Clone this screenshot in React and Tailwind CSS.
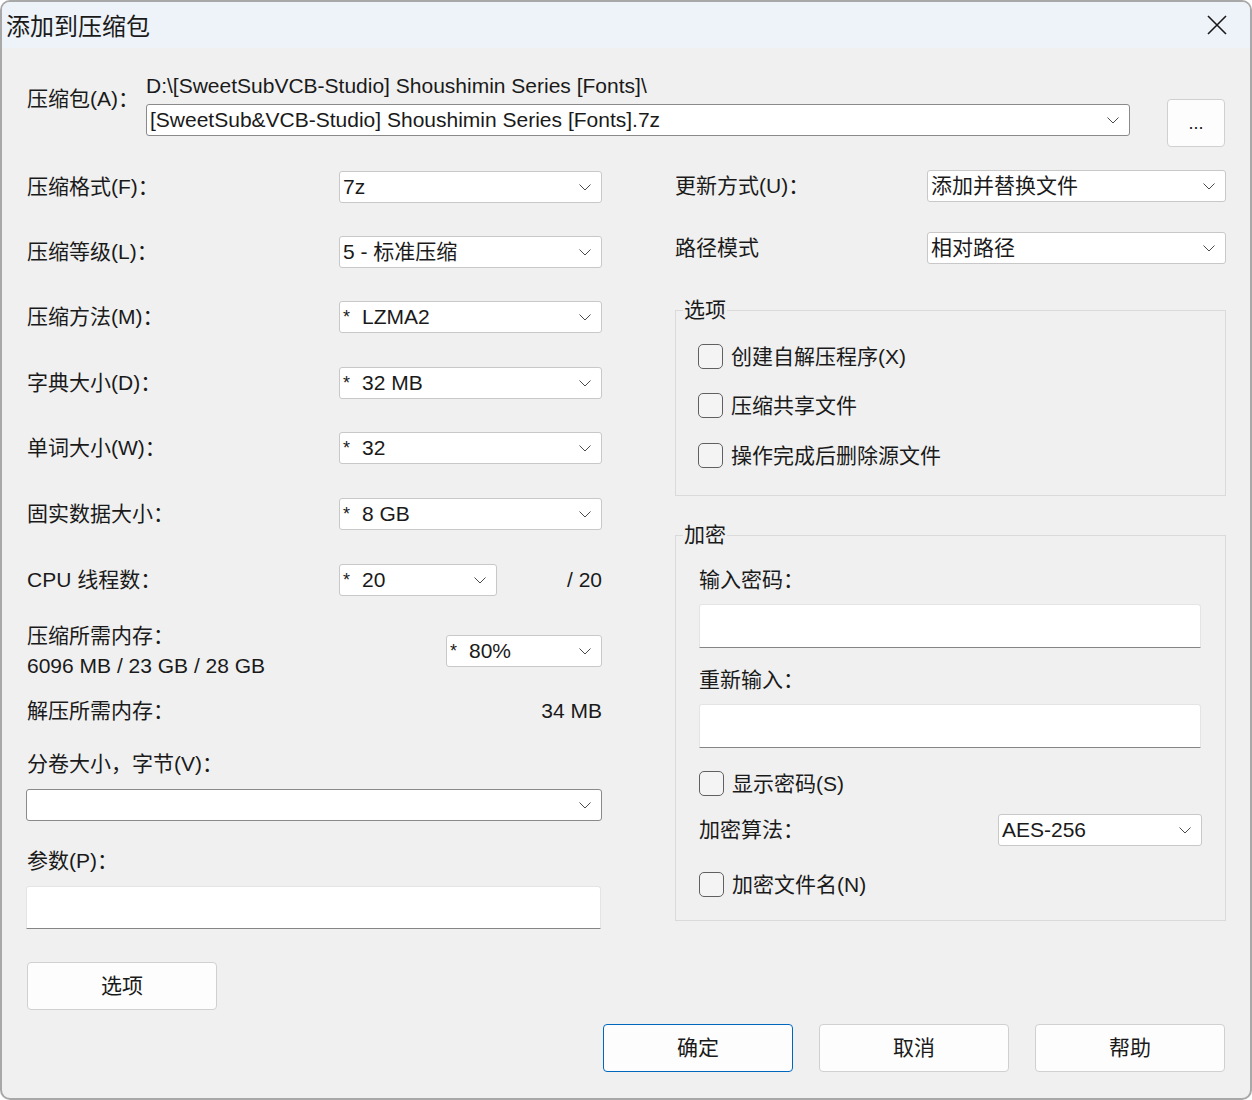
import React from "react";

function Chevron() {
  return (
    <svg width="12" height="7" viewBox="0 0 12 7" className="shrink-0">
      <path d="M0.5 0.5 L6 6 L11.5 0.5" stroke="#4a4a4a" strokeWidth="1" fill="none" />
    </svg>
  );
}

function Combo({ className = "", children }) {
  return (
    <div
      className={`h-[32px] bg-white border rounded-[3px] flex items-center justify-between pl-[3px] pr-[10px] whitespace-nowrap ${className}`}
    >
      <div className="flex items-center">{children}</div>
      <Chevron />
    </div>
  );
}

function Star({ children }) {
  return (
    <>
      <span className="w-[19px] text-[18px] leading-[20px] self-start mt-[2px]">*</span>
      <span>{children}</span>
    </>
  );
}

function Check({ label, className = "" }) {
  return (
    <div className={`flex items-center h-[25px] gap-[8px] ${className}`}>
      <span className="w-[25px] h-[25px] border border-[#606060] rounded-[5px] bg-[#f4f4f4] shrink-0" />
      <span>{label}</span>
    </div>
  );
}

function TextBox({ className = "" }) {
  return (
    <div
      className={`bg-white border border-[#e4e4e4] border-b-[#858585] rounded-t-[3px] ${className}`}
    />
  );
}

function Btn({ children, className = "" }) {
  return (
    <button
      className={`w-[190px] h-[48px] bg-[#fdfdfd] border rounded-[4px] flex items-center justify-center ${className}`}
    >
      {children}
    </button>
  );
}

function LRow({ label, mt, children }) {
  return (
    <div className={`flex items-center justify-between h-[32px] ${mt}`}>
      <span className="pl-[1px]">{label}</span>
      {children}
    </div>
  );
}

export default function App() {
  return (
    <div className="w-[1252px] h-[1100px] bg-[#f0f0f0] border-2 border-[#a8a8a8] rounded-[10px] overflow-hidden flex flex-col text-[21px] leading-[24px] text-[#1a1a1a] font-['Liberation_Sans','Noto_Sans_CJK_SC',sans-serif]">
      {/* Title bar */}
      <div className="h-[46px] shrink-0 bg-[#eef2f9] flex items-center justify-between pl-[4px] pr-[23px]">
        <span className="text-[24px] leading-[30px] font-['Noto_Sans_CJK_SC',sans-serif]">添加到压缩包</span>
        <svg width="20" height="20" viewBox="0 0 20 20">
          <path d="M1 1 L19 19 M19 1 L1 19" stroke="#1a1a1a" strokeWidth="1.6" fill="none" />
        </svg>
      </div>

      {/* Archive row */}
      <div className="flex pl-[25px] pt-[26px]">
        <div className="w-[119px] mt-[13px] h-[24px] whitespace-nowrap">压缩包(A)：</div>
        <div className="w-[984px] flex flex-col">
          <div className="h-[24px] whitespace-nowrap">
            {"D:\\[SweetSubVCB-Studio] Shoushimin Series [Fonts]\\"}
          </div>
          <Combo className="mt-[6px] w-[984px] border-[#8a8a8a]">
            [SweetSub&amp;VCB-Studio] Shoushimin Series [Fonts].7z
          </Combo>
        </div>
        <button className="ml-[37px] mt-[25px] w-[58px] h-[48px] bg-[#fdfdfd] border border-[#d0d0d0] rounded-[4px] flex items-center justify-center text-[18px]">
          ...
        </button>
      </div>

      {/* Main columns */}
      <div className="flex pl-[24px] gap-[73px]">
        {/* Left */}
        <div className="w-[576px] flex flex-col">
          <LRow label="压缩格式(F)：" mt="mt-[24px]">
            <Combo className="w-[263px] border-[#c8c8c8]">7z</Combo>
          </LRow>
          <LRow label="压缩等级(L)：" mt="mt-[33px]">
            <Combo className="w-[263px] border-[#c8c8c8]">5 - 标准压缩</Combo>
          </LRow>
          <LRow label="压缩方法(M)：" mt="mt-[33px]">
            <Combo className="w-[263px] border-[#c8c8c8]">
              <Star>LZMA2</Star>
            </Combo>
          </LRow>
          <LRow label="字典大小(D)：" mt="mt-[34px]">
            <Combo className="w-[263px] border-[#c8c8c8]">
              <Star>32 MB</Star>
            </Combo>
          </LRow>
          <LRow label="单词大小(W)：" mt="mt-[33px]">
            <Combo className="w-[263px] border-[#c8c8c8]">
              <Star>32</Star>
            </Combo>
          </LRow>
          <LRow label="固实数据大小：" mt="mt-[34px]">
            <Combo className="w-[263px] border-[#c8c8c8]">
              <Star>8 GB</Star>
            </Combo>
          </LRow>
          <div className="flex items-center h-[32px] mt-[34px]">
            <span className="w-[313px] pl-[1px]">CPU 线程数：</span>
            <Combo className="w-[158px] border-[#c8c8c8]">
              <Star>20</Star>
            </Combo>
            <span className="flex-1 text-right">/ 20</span>
          </div>
          <div className="flex items-center justify-between h-[54px] mt-[28px]">
            <div className="flex flex-col gap-[6px] pl-[1px]">
              <span className="h-[24px]">压缩所需内存：</span>
              <span className="h-[24px]">6096 MB / 23 GB / 28 GB</span>
            </div>
            <Combo className="w-[156px] border-[#c8c8c8]">
              <Star>80%</Star>
            </Combo>
          </div>
          <div className="flex justify-between h-[24px] mt-[21px]">
            <span className="pl-[1px]">解压所需内存：</span>
            <span>34 MB</span>
          </div>
          <div className="h-[24px] mt-[29px] pl-[1px]">分卷大小，字节(V)：</div>
          <Combo className="mt-[13px] w-[576px] border-[#8a8a8a]"></Combo>
          <div className="h-[24px] mt-[28px] pl-[1px]">参数(P)：</div>
          <TextBox className="mt-[13px] h-[43px] w-[575px]" />
          <Btn className="mt-[33px] ml-[1px] border-[#d0d0d0]">选项</Btn>
        </div>

        {/* Right */}
        <div className="w-[551px] flex flex-col">
          <div className="flex items-center justify-between h-[32px] mt-[23px]">
            <span>更新方式(U)：</span>
            <Combo className="w-[299px] border-[#c8c8c8]">添加并替换文件</Combo>
          </div>
          <div className="flex items-center justify-between h-[32px] mt-[30px]">
            <span>路径模式</span>
            <Combo className="w-[299px] border-[#c8c8c8]">相对路径</Combo>
          </div>

          <fieldset className="mt-[34px] border border-[#dadada] pl-[22px] pt-[22px] pb-[27px] flex flex-col">
            <legend className="ml-[-15px] px-[1px] h-[24px]">选项</legend>
            <Check label="创建自解压程序(X)" />
            <Check label="压缩共享文件" className="mt-[24px]" />
            <Check label="操作完成后删除源文件" className="mt-[25px]" />
          </fieldset>

          <fieldset className="mt-[27px] border border-[#dadada] pl-[23px] pr-[24px] pt-[21px] pb-[23px] flex flex-col">
            <legend className="ml-[-16px] px-[1px] h-[24px]">加密</legend>
            <div className="h-[24px]">输入密码：</div>
            <TextBox className="mt-[12px] h-[44px] w-full" />
            <div className="h-[24px] mt-[20px]">重新输入：</div>
            <TextBox className="mt-[12px] h-[44px] w-full" />
            <Check label="显示密码(S)" className="mt-[23px]" />
            <div className="flex items-center justify-between h-[32px] mt-[18px]">
              <span>加密算法：</span>
              <Combo className="w-[204px] -mr-px border-[#c8c8c8]">AES-256</Combo>
            </div>
            <Check label="加密文件名(N)" className="mt-[26px]" />
          </fieldset>
        </div>
      </div>

      {/* Bottom buttons */}
      <div className="flex justify-end gap-[26px] pr-[25px] mt-[14px]">
        <Btn className="border-[#0067c0]">确定</Btn>
        <Btn className="border-[#d0d0d0]">取消</Btn>
        <Btn className="border-[#d0d0d0]">帮助</Btn>
      </div>
    </div>
  );
}
